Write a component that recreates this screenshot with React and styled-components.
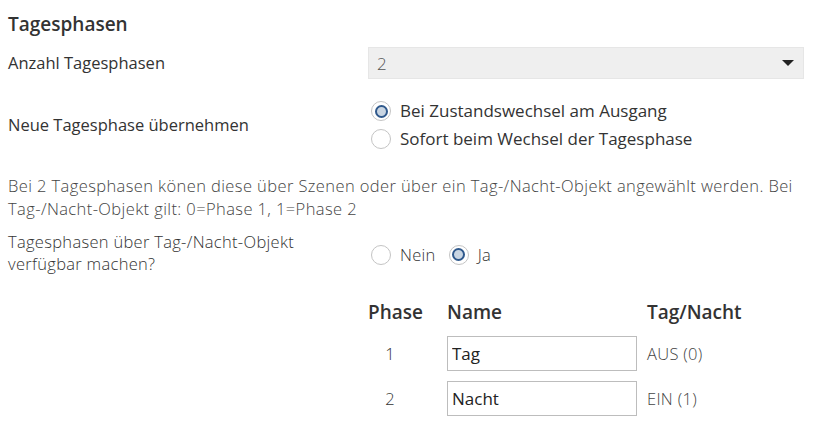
import React from 'react'
import styled, { createGlobalStyle } from 'styled-components'

const GlobalStyle = createGlobalStyle`
  body {
    margin: 0;
    background: #fff;
    font-family: "Open Sans", "Noto Sans", sans-serif;
    color: #333;
  }
`

const Page = styled.div`
  padding: 10px 9px 0 8px;
  width: 796px;
`

const Title = styled.h2`
  margin: 0;
  font-size: 19px;
  font-weight: 600;
  line-height: 28px;
  color: #333;
`

const Row = styled.div`
  display: grid;
  grid-template-columns: 360px 1fr;
  align-items: center;
  margin-top: ${p => p.$top || 0}px;
`

const Label = styled.div`
  font-size: 16.5px;
  line-height: 22px;
  font-weight: ${p => (p.$light ? 300 : 400)};
  letter-spacing: ${p => (p.$light ? '0.3px' : '0')};
`

const Select = styled.div`
  height: 32px;
  background: #efefef;
  border: 1px solid #e6e6e6;
  box-sizing: border-box;
  display: flex;
  align-items: center;
  justify-content: space-between;
  padding: 0 9px 0 8px;
  font-size: 17px;
  color: #555;
  font-weight: 300;
`

const Caret = styled.span`
  width: 0;
  height: 0;
  border-left: 6px solid transparent;
  border-right: 6px solid transparent;
  border-top: 6px solid #222;
`

const RadioList = styled.div`
  display: flex;
  flex-direction: ${p => (p.$inline ? 'row' : 'column')};
  gap: ${p => (p.$inline ? 10 : 6)}px;
  padding-top: ${p => (p.$inline ? 3 : 0)}px;
`

const Option = styled.label`
  display: flex;
  align-items: center;
  gap: 9px;
  font-size: ${p => (p.$light ? 16.5 : 17)}px;
  line-height: 22px;
  font-weight: ${p => (p.$light ? 300 : 400)};
  letter-spacing: ${p => (p.$light ? '0.3px' : '0')};
`

const Ring = styled.span`
  width: 20px;
  height: 20px;
  margin-left: 3px;
  border-radius: 50%;
  border: 1px solid #c4c4c4;
  box-sizing: border-box;
  display: flex;
  align-items: center;
  justify-content: center;
  background: #fff;
  flex-shrink: 0;

  &::after {
    content: '';
    display: ${p => (p.$checked ? 'block' : 'none')};
    width: 13px;
    height: 13px;
    border-radius: 50%;
    border: 2px solid #30598c;
    background: #c9d5e2;
    box-sizing: border-box;
  }
`

const Note = styled.p`
  margin: 24px 0 0;
  font-size: 16.5px;
  line-height: 23px;
  font-weight: 300;
  letter-spacing: 0.4px;
  color: #444;
  white-space: nowrap;
`

const Table = styled.div`
  display: grid;
  grid-template-columns: 79px 200px 1fr;
  grid-template-rows: 29px 35px 35px;
  row-gap: 10px;
  margin: 22px 0 0 360px;
  align-items: center;
`

const Head = styled.div`
  font-size: 19px;
  font-weight: 600;
  line-height: 26px;
  color: #333;
`

const Num = styled.div`
  font-size: 16.5px;
  font-weight: 300;
  text-align: center;
  width: 44px;
`

const NameInput = styled.input`
  width: 190px;
  height: 35px;
  box-sizing: border-box;
  border: 1px solid #bdbdbd;
  padding: 0 4px;
  font-family: inherit;
  font-size: 17px;
  color: #222;
  outline: none;
`

const Value = styled.div`
  font-size: 16.5px;
  font-weight: 300;
  letter-spacing: 0.3px;
  color: #444;
`

const Radio = ({ checked, children, light }) => (
  <Option $light={light}>
    <Ring $checked={checked} />
    {children}
  </Option>
)

const phases = [
  { id: 1, name: 'Tag', value: 'AUS (0)' },
  { id: 2, name: 'Nacht', value: 'EIN (1)' },
]

export default function App() {
  return (
    <Page>
      <GlobalStyle />
      <Title>Tagesphasen</Title>

      <Row $top={9}>
        <Label>Anzahl Tagesphasen</Label>
        <Select>
          2
          <Caret />
        </Select>
      </Row>

      <Row $top={21}>
        <Label>Neue Tagesphase übernehmen</Label>
        <RadioList>
          <Radio checked>Bei Zustandswechsel am Ausgang</Radio>
          <Radio>Sofort beim Wechsel der Tagesphase</Radio>
        </RadioList>
      </Row>

      <Note>
        Bei 2 Tagesphasen könen diese über Szenen oder über ein Tag-/Nacht-Objekt angewählt werden. Bei
        <br />
        Tag-/Nacht-Objekt gilt: 0=Phase 1, 1=Phase 2
      </Note>

      <Row $top={11}>
        <Label $light>
          Tagesphasen über Tag-/Nacht-Objekt
          <br />
          verfügbar machen?
        </Label>
        <RadioList $inline>
          <Radio light>Nein</Radio>
          <Radio light checked>Ja</Radio>
        </RadioList>
      </Row>

      <Table>
        <Head>Phase</Head>
        <Head>Name</Head>
        <Head>Tag/Nacht</Head>
        {phases.map(p => (
          <React.Fragment key={p.id}>
            <Num>{p.id}</Num>
            <NameInput defaultValue={p.name} />
            <Value>{p.value}</Value>
          </React.Fragment>
        ))}
      </Table>
    </Page>
  )
}
